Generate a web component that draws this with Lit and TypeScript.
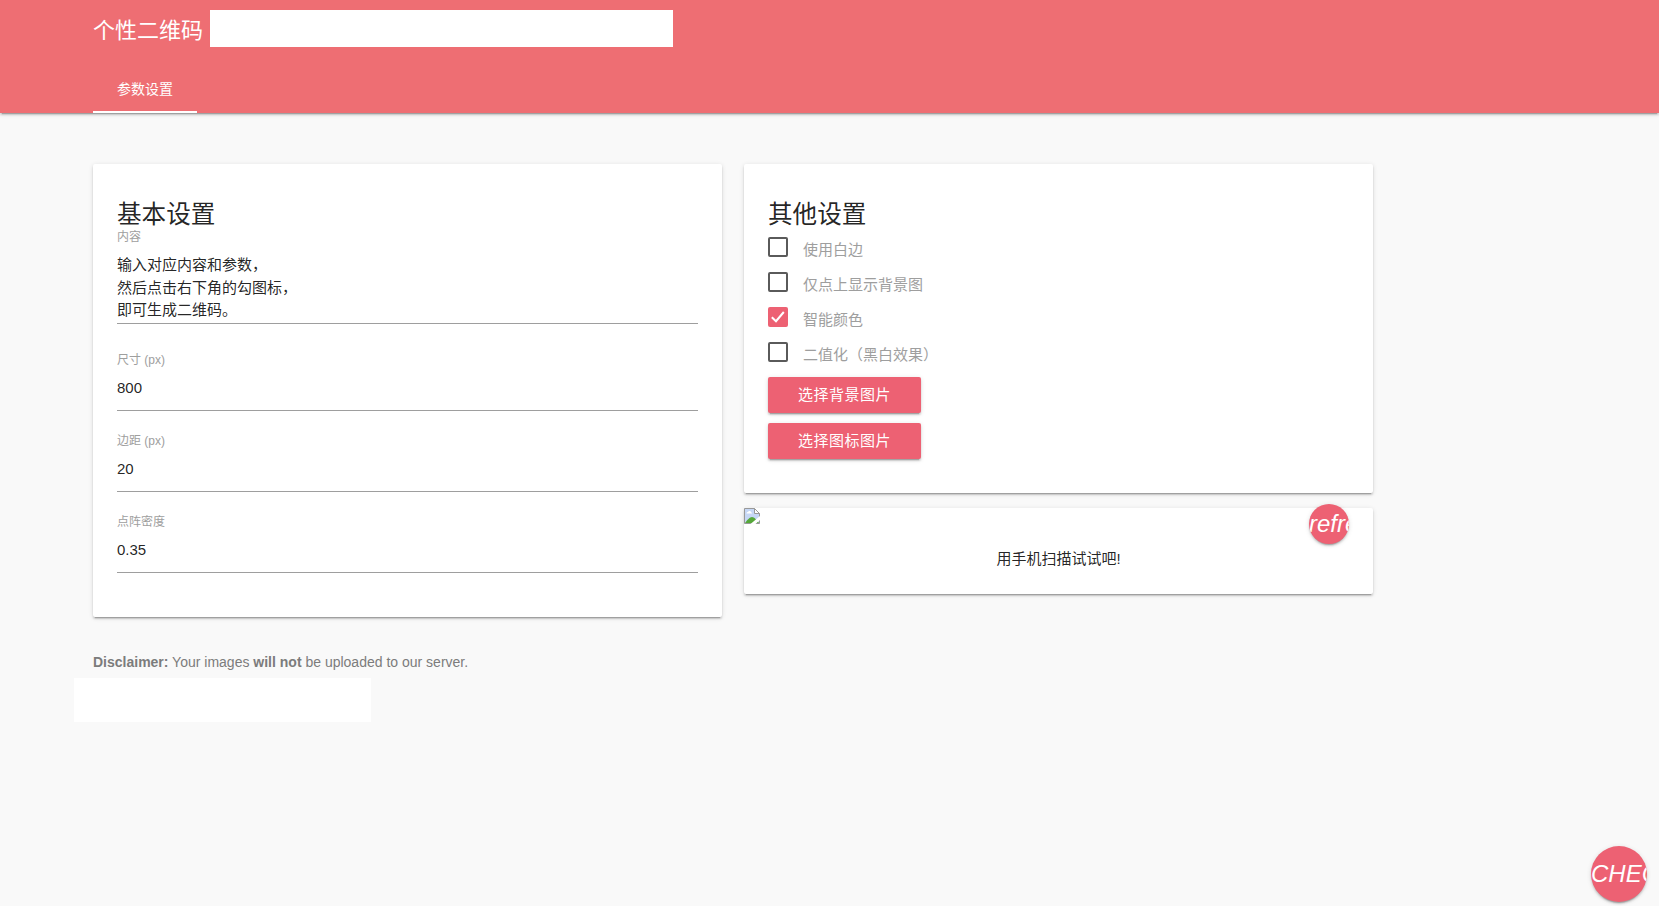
import { LitElement, html, css } from "lit";
import { customElement } from "lit/decorators.js";
import { classMap } from "lit/directives/class-map.js";

const fields = [
  { label: "尺寸 (px)", value: "800" },
  { label: "边距 (px)", value: "20" },
  { label: "点阵密度", value: "0.35" },
];

const options = [
  { label: "使用白边", checked: false },
  { label: "仅点上显示背景图", checked: false },
  { label: "智能颜色", checked: true },
  { label: "二值化（黑白效果）", checked: false },
];

@customElement("app-root")
export class AppRoot extends LitElement {
  static styles = css`
    :host {
      display: block;
      position: relative;
      height: 100vh;
      overflow: hidden;
      background: #f9f9f9;
      color: rgba(0, 0, 0, 0.87);
      font: 15px/22.5px "Liberation Sans", "Noto Sans CJK SC", sans-serif;
    }
    * { box-sizing: border-box; }
    .raised {
      box-shadow: 0 2px 2px 0 rgba(0, 0, 0, 0.14), 0 1px 5px 0 rgba(0, 0, 0, 0.12),
        0 3px 1px -2px rgba(0, 0, 0, 0.2);
    }
    header {
      height: 113px;
      padding: 10px 0 0 93px;
      background: #ee6e73;
      color: #fff;
      display: flex;
      flex-direction: column;
      justify-content: space-between;
    }
    .brand { display: flex; height: 37px; }
    .name { width: 117px; font-size: 22px; line-height: 41px; white-space: nowrap; }
    .blank { width: 463px; background: #fff; }
    .tab {
      width: 104px;
      height: 48px;
      border-bottom: 2px solid #fff;
      text-align: center;
      font-size: 14px;
      line-height: 48px;
    }
    main {
      display: grid;
      grid-template-columns: 629px 629px;
      column-gap: 22px;
      align-items: start;
      padding: 51px 0 0 93px;
    }
    .card { background: #fff; border-radius: 2px; }
    .basic { height: 453px; padding: 32px 24px; }
    .other { height: 329px; padding: 32px 24px; }
    h5 { margin: 0; height: 34px; font-size: 24.6px; line-height: 38px; font-weight: 400; }
    .label { color: #9e9e9e; font-size: 12px; line-height: 18px; }
    .area { border-bottom: 1px solid #9e9e9e; padding-top: 8px; height: 78px; white-space: pre; }
    .area-label { height: 16px; line-height: 14px; }
    .field { height: 81px; padding-top: 21px; border-bottom: 1px solid #9e9e9e; }
    .first { height: 87px; padding-top: 27px; }
    .value { padding-top: 8px; }
    .option { display: flex; height: 35px; color: #9e9e9e; }
    .options { padding-top: 7px; }
    .box { width: 20px; height: 20px; border: 2px solid #5a5a5a; border-radius: 2px; margin-right: 15px; }
    .box svg { display: none; }
    .on { border: 0; background: #ed6173; }
    .on svg { display: block; }
    .option span { line-height: 25px; }
    .button {
      width: 153px;
      height: 36px;
      margin-bottom: 10px;
      border-radius: 2px;
      background: #ed6173;
      color: #fff;
      text-align: center;
      line-height: 36px;
      letter-spacing: 0.5px;
    }
    .result { position: relative; height: 86px; margin-top: 15px; text-align: center; }
    .broken { display: block; }
    .result p { margin: 0; padding-top: 24px; }
    .round {
      position: absolute;
      border-radius: 50%;
      overflow: hidden;
      background: #ed6173;
      color: #fff;
      font-size: 24px;
      font-style: italic;
      text-align: left;
    }
    .refresh { right: 24px; top: -4px; width: 40px; height: 40px; line-height: 40px; }
    .check { right: 12px; bottom: 4px; width: 56px; height: 56px; line-height: 56px; }
    footer { padding: 34px 0 0 74px; color: #7c7c7c; font-size: 14px; line-height: 22px; }
    footer p { margin: 0 0 5px 19px; }
    footer .blank { width: 297px; height: 44px; }
  `;

  render() {
    return html`
      <header class="raised">
        <div class="brand"><div class="name">个性二维码</div><div class="blank"></div></div>
        <div class="tab">参数设置</div>
      </header>
      <main>
        <section class="card basic raised">
          <h5>基本设置</h5>
          <div class="label area-label">内容</div>
          <div class="area">${"输入对应内容和参数，\n然后点击右下角的勾图标，\n即可生成二维码。"}</div>
          ${fields.map((f, i) => html`
            <div class=${classMap({ field: true, first: i === 0 })}>
              <div class="label">${f.label}</div>
              <div class="value">${f.value}</div>
            </div>`)}
        </section>
        <div>
          <section class="card other raised">
            <h5>其他设置</h5>
            <div class="options">
              ${options.map((o) => html`
                <div class="option">
                  <div class=${classMap({ box: true, on: o.checked })}>
                    <svg width="20" height="20" viewBox="0 0 20 20" fill="none" stroke="#fff" stroke-width="2">
                      <path d="M3.8 10.2 8 14.2 15.8 5" />
                    </svg>
                  </div>
                  <span>${o.label}</span>
                </div>`)}
            </div>
            <div class="button raised">选择背景图片</div>
            <div class="button raised">选择图标图片</div>
          </section>
          <section class="card result raised">
            <svg class="broken" width="16" height="16" viewBox="0 0 16 16">
              <path d="M.5 15.5V.5h10l5 5v10z" fill="#c6d7f5" stroke="#999" />
              <path d="M10.5.5v5h5z" fill="#fff" stroke="#999" />
              <path d="M2.500 5.500c0-1.500 1-1.500 1.500-1.500 .5-1.500 3-1.500 3 .3 1 0 1 1.200 1 1.200z" fill="#fff" />
              <path d="M1 15c2-3 5-6 7-6s5 3 7 6z" fill="#56a83a" />
              <path d="M6.500 16 16 8v4l-4.500 4z" fill="#fff" />
            </svg>
            <p>用手机扫描试试吧!</p>
            <div class="round refresh raised">refresh</div>
          </section>
        </div>
      </main>
      <footer>
        <p><b>Disclaimer:</b> Your images <b>will not</b> be uploaded to our server.</p>
        <div class="blank"></div>
      </footer>
      <div class="round check raised">CHECK</div>
    `;
  }
}
